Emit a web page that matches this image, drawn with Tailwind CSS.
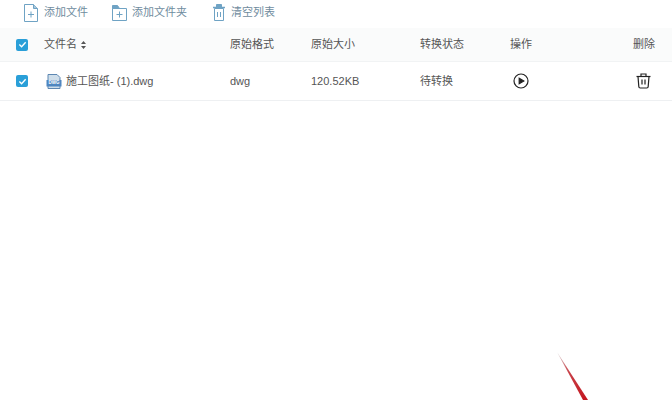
<!DOCTYPE html>
<html lang="zh">
<head>
    <meta charset="UTF-8" />
    <title>文件列表</title>
    <script src="https://cdn.jsdelivr.net/npm/@tailwindcss/browser@4"></script>
</head>
<body class="relative w-[672px] h-[400px] overflow-hidden bg-white font-['Liberation_Sans','Noto_Sans_CJK_SC',sans-serif] text-[11px] text-[#555]">
    <!-- toolbar -->
    <div class="flex items-center h-[28px] pl-[24px] pb-[3px] text-[#6f8c9e]">
        <div class="flex items-center gap-[6px] w-[88px]">
            <svg class="w-[14px] h-[18px]" viewBox="0 0 14 18" fill="none" stroke="#6fa3c4" stroke-width="1"><path d="M0.500 0.500h9l4 4v13h-13z"/><path d="M9.500 0.500v4h4" fill="#a9c8dc"/><path d="M4 10.500h6M7 7.500v6"/></svg>
            <span>添加文件</span>
        </div>
        <div class="flex items-center gap-[5px] w-[101px]">
            <svg class="w-[15px] h-[16px]" viewBox="0 0 15 16" fill="none" stroke="#6fa3c4" stroke-width="1"><path d="M0.500 3.500h14v12h-14z"/><path d="M0.500 0.500h5l2 3h-7z" fill="#6fa3c4"/><path d="M4.500 9.500h6M7.500 6.500v6"/></svg>
            <span>添加文件夹</span>
        </div>
        <div class="flex items-center gap-[6px]">
            <svg class="w-[12px] h-[17px]" viewBox="0 0 12 17" fill="none" stroke="#6fa3c4" stroke-width="1"><path d="M1.500 4.500h9v12h-9z"/><path d="M0 3.500h12" stroke-width="1.500"/><path d="M3.500 0.500h5v3h-5z" fill="#6fa3c4"/><path d="M4.500 8v5M7.500 8v5"/></svg>
            <span>清空列表</span>
        </div>
    </div>

    <!-- table header -->
    <div class="grid grid-cols-[44px_186px_81px_109px_90px_123px_1fr] items-center h-[34px] bg-[#fafbfb] border-b border-[#f1f3f4]">
        <div class="flex justify-center">
            <span class="flex items-center justify-center w-[12px] h-[12px] rounded-[2px] bg-[#2a9fd8]">
                <svg class="w-[9px] h-[9px]" viewBox="0 0 10 10" fill="none" stroke="white" stroke-width="1.500"><path d="M1.500 5l2.500 2.500 4.500-5"/></svg>
            </span>
        </div>
        <div class="flex items-center gap-[4px]">
            <span>文件名</span>
            <svg class="w-[5px] h-[8px]" viewBox="0 0 5 8" fill="#555"><path d="M2.500 0l2.500 3h-5zM2.500 8l-2.500-3h5z"/></svg>
        </div>
        <div>原始格式</div>
        <div>原始大小</div>
        <div>转换状态</div>
        <div>操作</div>
        <div>删除</div>
    </div>

    <!-- file row -->
    <div class="grid grid-cols-[44px_186px_81px_109px_90px_123px_1fr] items-center h-[39px] border-b border-[#eef0f2]">
        <div class="flex justify-center">
            <span class="flex items-center justify-center w-[12px] h-[12px] rounded-[2px] bg-[#2a9fd8]">
                <svg class="w-[9px] h-[9px]" viewBox="0 0 10 10" fill="none" stroke="white" stroke-width="1.500"><path d="M1.500 5l2.500 2.500 4.500-5"/></svg>
            </span>
        </div>
        <div class="flex items-center gap-[4px] pl-[2px]">
            <span class="relative block w-[16px] h-[15px]">
                <svg class="w-[16px] h-[15px]" viewBox="0 0 16 15"><path d="M2 0.500h9l3 3v11h-12z" fill="#cfdeea" stroke="#5d87b2" stroke-width="1"/><rect x="0.500" y="6" width="15" height="6.500" fill="#4f86c0"/></svg>
                <span class="absolute left-[1px] top-[6.500px] w-[14px] text-center text-[4.500px] leading-[6px] font-bold text-white">DWG</span>
            </span>
            <span>施工图纸- (1).dwg</span>
        </div>
        <div>dwg</div>
        <div>120.52KB</div>
        <div>待转换</div>
        <div class="pl-[3px]">
            <svg class="w-[16px] h-[16px]" viewBox="0 0 16 16" fill="none" stroke="#222" stroke-width="1.200"><circle cx="8" cy="8" r="7"/><path d="M6.200 5.200l4.600 2.800-4.600 2.800z" fill="#222"/></svg>
        </div>
        <div class="pl-[3px]">
            <svg class="w-[15px] h-[16px]" viewBox="0 0 15 16" fill="none" stroke="#222" stroke-width="1.200"><path d="M0.500 3.500h14"/><path d="M5 3.500v-2.500h5v2.500"/><path d="M2 3.500l0.800 10a1.500 1.500 0 0 0 1.500 1.500h6.400a1.500 1.500 0 0 0 1.500-1.500l0.800-10"/><path d="M6 6.500v5M9 6.500v5"/></svg>
        </div>
    </div>

    <!-- red arrow over the page -->
    <svg class="absolute left-[550px] top-[345px] w-[50px] h-[55px]" viewBox="0 0 50 55" fill="none">
        <defs>
            <linearGradient id="tail" x1="7" y1="7" x2="36" y2="55" gradientUnits="userSpaceOnUse">
                <stop offset="0" stop-color="#d8d8d8"/>
                <stop offset="0.4" stop-color="#c8434a"/>
                <stop offset="1" stop-color="#c4161f"/>
            </linearGradient>
        </defs>
        <path d="M7 7L38 55L33 55Z" fill="url(#tail)"/>
    </svg>
</body>
</html>
